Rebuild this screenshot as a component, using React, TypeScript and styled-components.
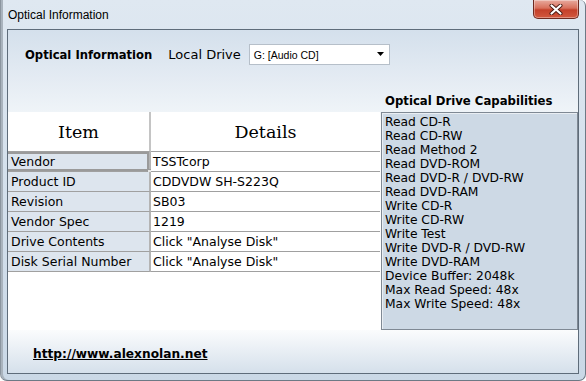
import React, { FC } from "react";
import styled, { createGlobalStyle } from "styled-components";

const GlobalStyle = createGlobalStyle`
  html,
  body {
    margin: 0;
    padding: 0;
    background: #fff;
  }

  body {
    font-family: Verdana, "DejaVu Sans", sans-serif;
  }
`;

const Window = styled.div`
  box-sizing: border-box;
  width: 586px;
  height: 381px;
  display: flex;
  flex-direction: column;
  padding: 0 6px 6px;
  background: linear-gradient(to bottom, #dfe8f1 0%, #d4e0ec 45%, #cad8e6 100%);
  border-left: 1px solid #8b959f;
  border-right: 1px solid #6d7985;
  border-bottom: 1px solid #6d7985;
  border-radius: 0 6px 7px 7px;
  box-shadow: inset 2px 0 0 #a9b3bd;
  overflow: hidden;
`;

const TitleBar = styled.div`
  display: flex;
  align-items: flex-start;
  height: 29px;
  flex-shrink: 0;
`;

const Title = styled.div`
  padding: 8px 0 0 1px;
  font-family: "Segoe UI", "Liberation Sans", sans-serif;
  font-size: 12px;
  line-height: 14px;
  color: #000;
`;

const CloseButton = styled.div`
  box-sizing: border-box;
  margin-left: auto;
  width: 46px;
  height: 19px;
  display: flex;
  align-items: center;
  justify-content: center;
  border: 1px solid #6e2a20;
  border-top: none;
  border-radius: 0 0 5px 5px;
  background: linear-gradient(
    to bottom,
    #e8aa9e 0%,
    #d8705c 45%,
    #c4402a 55%,
    #d2583e 100%
  );
  box-shadow: inset 0 0 0 1px rgba(255, 255, 255, 0.35);
`;

const Client = styled.div`
  flex: 1;
  display: flex;
  flex-direction: column;
  border: 1px solid #5e6c7a;
  background: linear-gradient(
    to bottom,
    #d4e0ec 0%,
    #e4ebf3 14%,
    #eff4f8 24%,
    #ffffff 27%,
    #ffffff 86%,
    #d5e0eb 100%
  );
`;

const Header = styled.div`
  display: flex;
  align-items: center;
  height: 21px;
  padding: 14px 0 0 17px;
`;

const HeaderTitle = styled.div`
  font-weight: bold;
  font-size: 11.6px;
  color: #000;
  margin-right: 16px;
`;

const Label = styled.div`
  font-size: 13px;
  color: #000;
  margin-right: 8px;
`;

const Select = styled.div`
  box-sizing: border-box;
  width: 141px;
  height: 21px;
  display: flex;
  align-items: center;
  padding: 0 4px 0 4px;
  background: #fff;
  border: 1px solid #b6bfc9;
  font-family: Tahoma, "Liberation Sans", sans-serif;
  font-size: 10.5px;
  color: #000;

  svg {
    margin-left: auto;
  }
`;

const Body = styled.div`
  display: grid;
  grid-template-columns: 372px 198px;
  grid-template-rows: 22px 218px;
  margin-top: 25px;
`;

const PanelTitle = styled.div`
  grid-column: 2;
  grid-row: 1;
  display: flex;
  align-items: center;
  padding-left: 5px;
  font-weight: bold;
  font-size: 11.7px;
  color: #000;
`;

const GridArea = styled.div`
  grid-column: 1;
  grid-row: 2;
  background: #fff;
`;

const DataGrid = styled.table`
  width: 372px;
  table-layout: fixed;
  border-collapse: separate;
  border-spacing: 0;
`;

const HeadCell = styled.th<{ $first?: boolean }>`
  height: 39px;
  padding: 0;
  font-family: "DejaVu Serif", "Liberation Serif", serif;
  font-weight: normal;
  font-size: 17.5px;
  color: #000;
  text-align: center;
  background: #fff;
  border-bottom: 1px solid #a0a0a0;
  border-right: ${(p) => (p.$first ? "2px solid #c4c4c4" : "none")};
`;

const Cell = styled.td<{ $item?: boolean; $selected?: boolean }>`
  position: relative;
  height: 19px;
  padding: 0 0 0 ${(p) => (p.$item ? "3px" : "2px")};
  font-size: 12.5px;
  line-height: 19px;
  color: #000;
  white-space: nowrap;
  background: ${(p) => (p.$item ? "#dde5ee" : "#fff")};
  border-bottom: 1px solid #a0a0a0;
  border-right: ${(p) => (p.$item ? "2px solid #b4b4b4" : "none")};
  box-shadow: ${(p) =>
    p.$selected
      ? "inset 0 2px 0 #9a9a9a, inset 0 -2px 0 #9a9a9a, inset -2px 0 0 #9a9a9a"
      : "none"};

  ${(p) =>
    p.$selected &&
    `
    &::after {
      content: "";
      position: absolute;
      right: -4px;
      bottom: -4px;
      width: 4px;
      height: 4px;
      background: #e6e6e6;
      border: 1px solid #9a9a9a;
    }
  `}
`;

const ListBox = styled.div`
  grid-column: 2;
  grid-row: 2;
  box-sizing: border-box;
  margin-left: 1px;
  padding: 2px 0 0 3px;
  background: #cdd9e5;
  border: 1px solid #7f8994;
  box-shadow: inset 1px 1px 0 #e9eef3;
`;

const ListItem = styled.div`
  font-size: 12.3px;
  line-height: 14px;
  color: #000;
  white-space: nowrap;
`;

const Footer = styled.div`
  flex: 1;
  display: flex;
  align-items: center;
  padding: 4px 0 0 25px;
`;

const SiteLink = styled.a`
  font-weight: bold;
  font-size: 12.2px;
  color: #000;
  text-decoration: underline;
`;

const rows = [
  ["Vendor", "TSSTcorp"],
  ["Product ID", "CDDVDW SH-S223Q"],
  ["Revision", "SB03"],
  ["Vendor Spec", "1219"],
  ["Drive Contents", 'Click "Analyse Disk"'],
  ["Disk Serial Number", 'Click "Analyse Disk"'],
];

const capabilities = [
  "Read CD-R",
  "Read CD-RW",
  "Read Method 2",
  "Read DVD-ROM",
  "Read DVD-R / DVD-RW",
  "Read DVD-RAM",
  "Write CD-R",
  "Write CD-RW",
  "Write Test",
  "Write DVD-R / DVD-RW",
  "Write DVD-RAM",
  "Device Buffer: 2048k",
  "Max Read Speed: 48x",
  "Max Write Speed: 48x",
];

const App: FC = () => {
  return (
    <>
      <GlobalStyle />
      <Window>
        <TitleBar>
          <Title>Optical Information</Title>
          <CloseButton>
            <svg width="14" height="11" viewBox="0 0 14 11">
              <path d="M2.5 1.5 L11.5 9.5 M11.5 1.5 L2.5 9.5" stroke="#4a1a12" strokeWidth="4" strokeLinecap="round" />
              <path d="M2.5 1.5 L11.5 9.5 M11.5 1.5 L2.5 9.5" stroke="#fff" strokeWidth="2.2" strokeLinecap="round" />
            </svg>
          </CloseButton>
        </TitleBar>
        <Client>
          <Header>
            <HeaderTitle>Optical Information</HeaderTitle>
            <Label>Local Drive</Label>
            <Select>
              G: [Audio CD]
              <svg width="8" height="5" viewBox="0 0 8 5">
                <polygon points="0,0 7,0 3.5,4" fill="#000" />
              </svg>
            </Select>
          </Header>
          <Body>
            <PanelTitle>Optical Drive Capabilities</PanelTitle>
            <GridArea>
              <DataGrid>
                <colgroup>
                  <col style={{ width: 143 }} />
                  <col />
                </colgroup>
                <thead>
                  <tr>
                    <HeadCell $first>Item</HeadCell>
                    <HeadCell>Details</HeadCell>
                  </tr>
                </thead>
                <tbody>
                  {rows.map(([item, detail], index) => (
                    <tr key={index}>
                      <Cell $item $selected={index === 0}>
                        {item}
                      </Cell>
                      <Cell>{detail}</Cell>
                    </tr>
                  ))}
                </tbody>
              </DataGrid>
            </GridArea>
            <ListBox>
              {capabilities.map((item, index) => (
                <ListItem key={index}>{item}</ListItem>
              ))}
            </ListBox>
          </Body>
          <Footer>
            <SiteLink href="#">http://www.alexnolan.net</SiteLink>
          </Footer>
        </Client>
      </Window>
    </>
  );
};

export default App;
